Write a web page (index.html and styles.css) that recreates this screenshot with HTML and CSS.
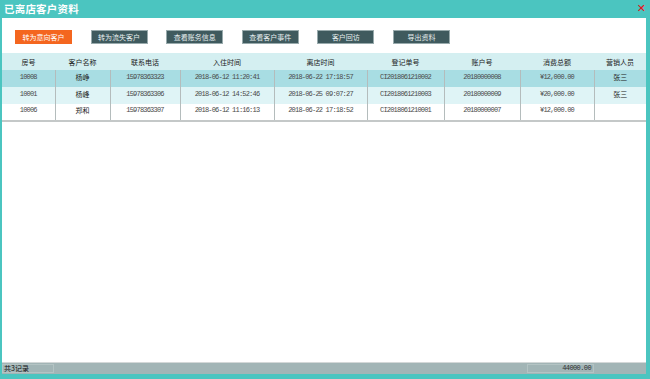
FILE: index.html
```html
<!DOCTYPE html>
<html lang="zh">
<head>
<meta charset="utf-8">
<title>已离店客户资料</title>
<link rel="stylesheet" href="styles.css">
</head>
<body>
<div class="window">
  <div class="titlebar">
    <span class="title">已离店客户资料</span>
    <span class="close">✕</span>
  </div>
  <div class="body">
    <div class="toolbar">
      <button class="btn btn-primary">转为意向客户</button>
      <button class="btn">转为流失客户</button>
      <button class="btn">查看账务信息</button>
      <button class="btn">查看客户事件</button>
      <button class="btn">客户回访</button>
      <button class="btn">导出资料</button>
    </div>
    <table class="grid">
      <colgroup>
        <col style="width:53px"><col style="width:55px"><col style="width:70px"><col style="width:94px"><col style="width:93px"><col style="width:77px"><col style="width:76px"><col style="width:74px"><col style="width:52px">
      </colgroup>
      <thead>
        <tr><th>房号</th><th>客户名称</th><th>联系电话</th><th>入住时间</th><th>离店时间</th><th>登记单号</th><th>账户号</th><th>消费总额</th><th>营销人员</th></tr>
      </thead>
      <tbody>
        <tr class="selected"><td class="num">10008</td><td class="cjk">杨峥</td><td class="num">15978363323</td><td class="num">2018-06-12 11:20:41</td><td class="num">2018-06-22 17:18:57</td><td class="num">CI2018061210002</td><td class="num">20180000008</td><td class="num">¥12,000.00</td><td class="cjk">张三</td></tr>
        <tr class="alt"><td class="num">10001</td><td class="cjk">杨峰</td><td class="num">15978363306</td><td class="num">2018-06-12 14:52:46</td><td class="num">2018-06-25 09:07:27</td><td class="num">CI2018061210003</td><td class="num">20180000009</td><td class="num">¥20,000.00</td><td class="cjk">张三</td></tr>
        <tr><td class="num">10006</td><td class="cjk">郑和</td><td class="num">15978363307</td><td class="num">2018-06-12 11:16:13</td><td class="num">2018-06-22 17:18:52</td><td class="num">CI2018061210001</td><td class="num">20180000007</td><td class="num">¥12,000.00</td><td class="cjk"></td></tr>
      </tbody>
    </table>
    <div class="spacer"></div>
    <div class="statusbar">
      <span class="cell count">共3记录</span>
      <span class="cell total">44000.00</span>
    </div>
  </div>
</div>
</body>
</html>
```
FILE: styles.css
```css
* { box-sizing: border-box; }
html, body { margin: 0; padding: 0; }
body {
  width: 650px;
  height: 379px;
  overflow: hidden;
  font-family: "Noto Sans CJK SC", "Liberation Sans", sans-serif;
}
.window {
  width: 650px;
  height: 379px;
  background: #4bc5c0;
  padding: 0 4px 5px 2px;
  display: flex;
  flex-direction: column;
}
.titlebar {
  height: 18px;
  flex: none;
  display: flex;
  align-items: center;
  justify-content: space-between;
  padding: 0 0 0 2px;
}
.title {
  color: #fff;
  font-size: 10.5px;
  font-weight: bold;
  line-height: 1;
  letter-spacing: 0.2px;
}
.close {
  color: #e8101a;
  font-size: 11px;
  font-weight: bold;
  line-height: 1;
  font-family: "DejaVu Sans", sans-serif;
  margin-right: 0;
  margin-top: -2px;
}
.body {
  flex: 1;
  background: #fff;
  display: flex;
  flex-direction: column;
}
.toolbar {
  display: flex;
  gap: 18.6px;
  padding: 12px 0 0 13px;
  height: 35px;
  flex: none;
}
.btn {
  width: 57px;
  height: 14px;
  padding: 0;
  margin: 0;
  border: 1px solid #98aaac;
  background: #3f5a5e;
  color: #e6eeee;
  font-family: "Noto Sans CJK SC", sans-serif;
  font-size: 7px;
  line-height: 12px;
  text-align: center;
}
.btn-primary {
  background: #f4661f;
  border-color: #f4661f;
  color: #fff;
}
.grid {
  table-layout: fixed;
  border-collapse: collapse;
  width: 644px;
  margin-top: 0;
}
.grid th {
  background: #d4eff1;
  height: 17px;
  font-size: 7px;
  font-weight: normal;
  color: #222;
  padding: 0;
  text-align: center;
  font-family: "Noto Sans CJK SC", sans-serif;
}
.grid td {
  height: 17px;
  padding: 0 0 4px 0;
  text-align: center;
  color: #222;
  border-left: 1px solid #b4bcbc;
  white-space: nowrap;
  overflow: hidden;
}
.grid td:first-child { border-left: none; }
.grid tbody tr:last-child td { border-bottom: 2px solid #c4c8c8; }
.grid td.num {
  font-family: "Liberation Mono", monospace;
  font-size: 7px;
  letter-spacing: -0.8px;
  color: #4a4a4a;
}
.grid td.cjk {
  font-family: "Noto Sans CJK SC", sans-serif;
  font-size: 7px;
}
.grid tr.selected td { background: #a8dde3; }
.grid tr.alt td { background: #dff4f6; }
.spacer { flex: 1; }
.statusbar {
  height: 12px;
  flex: none;
  background: #a2b5b6;
  border-top: 1px solid #d4d8d8;
  display: flex;
  align-items: center;
}
.cell {
  height: 9px;
  border: 1px solid #b4c4c4;
  font-size: 7px;
  line-height: 7px;
  color: #111;
  display: flex;
  align-items: center;
}
.count {
  width: 52px;
  padding-left: 1px;
  font-family: "Noto Sans CJK SC", sans-serif;
}
.total {
  margin-left: auto;
  margin-right: 52px;
  width: 67px;
  justify-content: flex-end;
  padding-right: 2px;
  font-family: "Liberation Mono", monospace;
  letter-spacing: -0.6px;
  color: #333;
}
```
